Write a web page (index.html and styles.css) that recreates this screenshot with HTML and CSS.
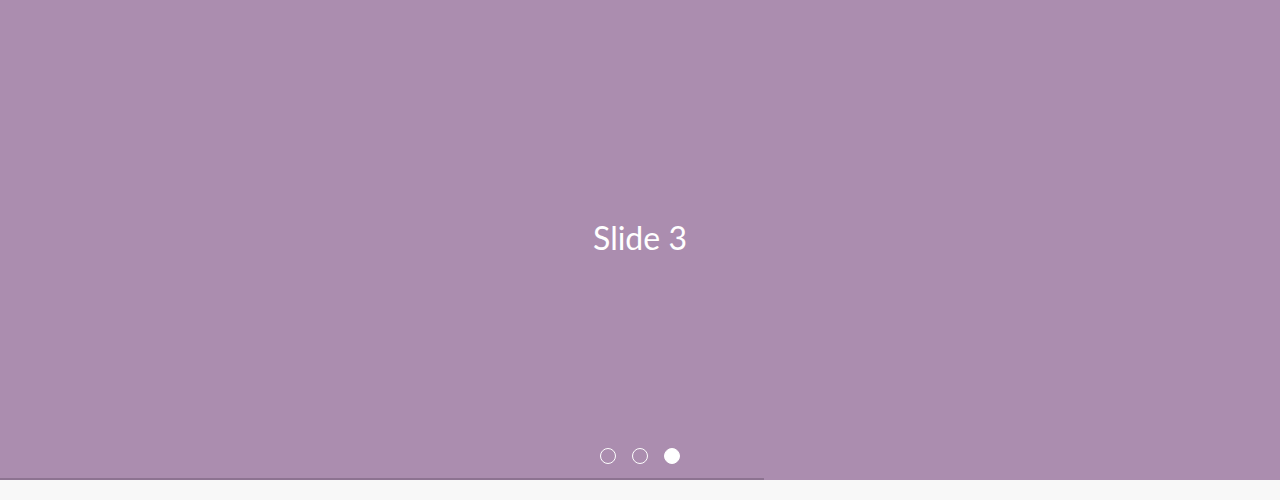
FILE: index.html
```html
<!DOCTYPE html>
<html>
<head>
<meta charset="utf-8">
<link rel="stylesheet" href="styles.css">
</head>
<body>
<div class="carousel">
  <div class="slide">
    <span class="slide-title">Slide 3</span>
  </div>
  <div class="dots">
    <span class="dot"></span>
    <span class="dot"></span>
    <span class="dot active"></span>
  </div>
  <div class="progress"><div class="progress-fill" style="width: 764px"></div></div>
</div>
</body>
</html>
```
FILE: styles.css
```css
html, body {
  margin: 0;
  padding: 0;
  background: #f8f8f8;
  font-family: Lato, "Open Sans", sans-serif;
}
.carousel {
  position: relative;
  height: 480px;
  background: #ab8daf;
  overflow: hidden;
}
.slide {
  height: 474px;
  display: flex;
  align-items: center;
  justify-content: center;
}
.slide-title {
  color: #ffffff;
  font-size: 32px;
  font-weight: 400;
}
.dots {
  position: absolute;
  left: 0;
  right: 0;
  top: 448px;
  display: flex;
  justify-content: center;
  gap: 16px;
}
.dot {
  width: 16px;
  height: 16px;
  box-sizing: border-box;
  border: 1px solid #ffffff;
  border-radius: 50%;
}
.dot.active {
  background: #ffffff;
}
.progress {
  position: absolute;
  left: 0;
  right: 0;
  bottom: 0;
  height: 2px;
}
.progress-fill {
  height: 2px;
  background: #8d7391;
}
```
